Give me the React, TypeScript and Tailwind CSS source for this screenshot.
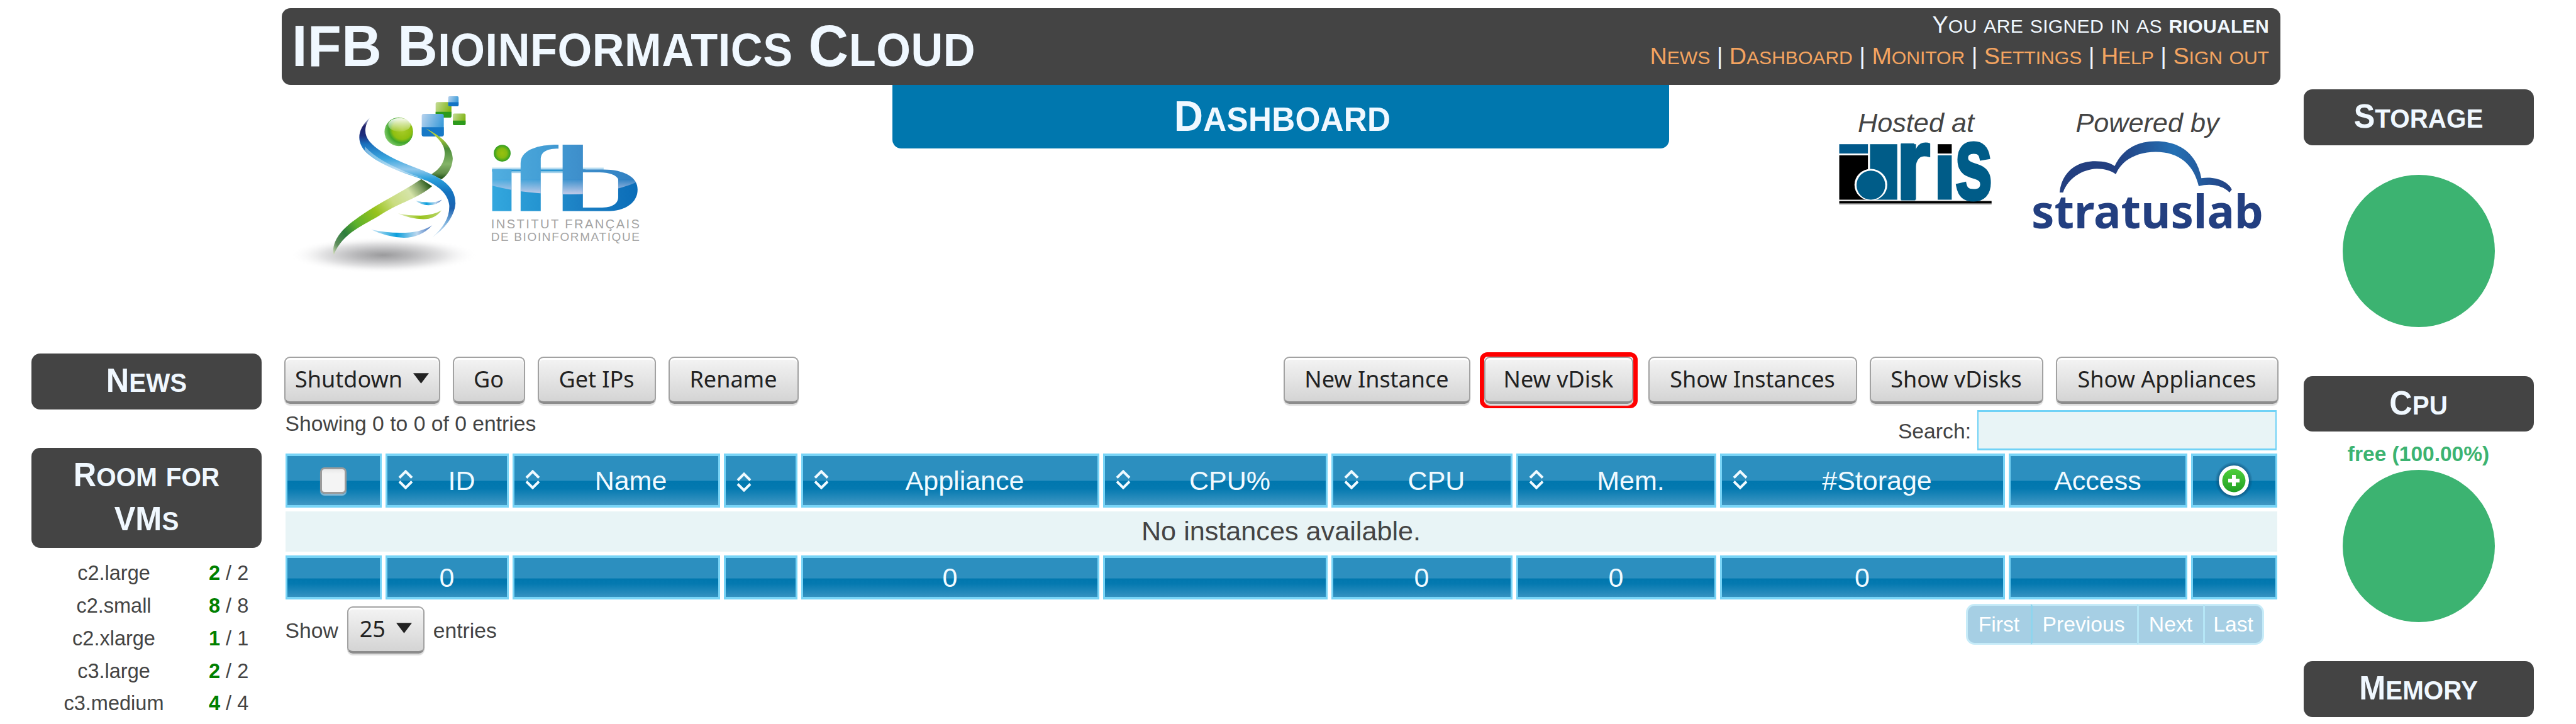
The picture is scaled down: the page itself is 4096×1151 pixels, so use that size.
import React from "react";

const SANS = "font-['Liberation_Sans',Arial,sans-serif]";

/* Small capitals at 80% of the full capital size. */
function Caps({ text }: { text: string }) {
  return (
    <>
      {text.split(/([a-z]+)/).map((part, i) =>
        /^[a-z]/.test(part) ? (
          <span key={i} className="text-[0.8em] leading-none uppercase">{part}</span>
        ) : (
          <React.Fragment key={i}>{part}</React.Fragment>
        ),
      )}
    </>
  );
}

function PanelTitle({ lines }: { lines: string[] }) {
  return (
    <h2 className="w-[366px] rounded-[14px] bg-[#444] py-[9px] text-center text-[50.5px] leading-[70.6px] font-bold text-[#f0f8ff]">
      {lines.map((line) => (
        <span key={line} className="block origin-[50%_75%] scale-y-[1.05]">
          <Caps text={line} />
        </span>
      ))}
    </h2>
  );
}

function Button({ label, className, arrow }: { label: string; className: string; arrow?: boolean }) {
  return (
    <button
      className={`flex h-[75px] shrink-0 items-center justify-center rounded-[9px] border-[2.5px] border-[#a2a2a2] border-b-[4px] border-b-[#8c8c8c] bg-linear-to-b from-[#f4f4f4] to-[#d4d4d4] font-['Noto_Sans','Open_Sans',sans-serif] text-[36px] whitespace-nowrap text-[#222] shadow-[inset_0_3px_0_#fff,0_3px_1px_#dedede] ${className}`}
    >
      {label}
      {arrow && <Arrow />}
    </button>
  );
}

function Arrow() {
  return (
    <svg className="mb-[4px] ml-[17px] h-[17px] w-[25px] shrink-0" viewBox="0 0 26 17">
      <path d="M0 0H26L13 17Z" fill="#222" />
    </svg>
  );
}

function SortIcon() {
  return (
    <svg className="h-[31px] w-[24px]" viewBox="0 0 24 31" fill="none" stroke="#f0faff" strokeWidth="4">
      <path d="M2 12.5L12 2.5L22 12.5M2 18.5L12 28.5L22 18.5" />
    </svg>
  );
}

function AddIcon() {
  return (
    <svg className="h-[60px] w-[60px]" viewBox="0 0 60 60">
      <defs>
        <linearGradient id="add" x1="0" y1="0" x2="0" y2="1">
          <stop offset="0" stopColor="#4fcf3c" />
          <stop offset="1" stopColor="#1f9f22" />
        </linearGradient>
        <radialGradient id="halo">
          <stop offset="0.78" stopColor="#0b4a72" stopOpacity="0.7" />
          <stop offset="1" stopColor="#0b4a72" stopOpacity="0" />
        </radialGradient>
      </defs>
      <circle cx="30" cy="30" r="30" fill="url(#halo)" />
      <circle cx="30" cy="30" r="24" fill="#fff" />
      <circle cx="30" cy="30" r="18.5" fill="url(#add)" />
      <path d="M30 21V39M21 30H39" stroke="#fff" strokeWidth="6" />
    </svg>
  );
}

function IfbLogo() {
  return (
    <svg className="h-[310px] w-[620px]" viewBox="447.5 135 620 310">
      <defs>
        <radialGradient id="floor">
          <stop offset="0" stopColor="#9a9a9c" />
          <stop offset="0.3" stopColor="#b9b9bb" />
          <stop offset="0.65" stopColor="#e4e4e5" />
          <stop offset="1" stopColor="#fff" stopOpacity="0" />
        </radialGradient>
        <linearGradient id="strandBlue" gradientUnits="userSpaceOnUse" x1="0" y1="218" x2="0" y2="1140">
          <stop offset="0" stopColor="#cfe0f0" />
          <stop offset="0.07" stopColor="#20206a" />
          <stop offset="0.15" stopColor="#1c2f80" />
          <stop offset="0.22" stopColor="#1a70bd" />
          <stop offset="0.34" stopColor="#3aa5de" />
          <stop offset="0.43" stopColor="#93c9ec" />
          <stop offset="0.51" stopColor="#2ba0dc" />
          <stop offset="0.62" stopColor="#1474c0" />
          <stop offset="0.76" stopColor="#1d62b0" />
          <stop offset="0.88" stopColor="#7fb2dd" />
          <stop offset="1" stopColor="#e4f1fa" />
        </linearGradient>
        <linearGradient id="strandTop" gradientUnits="userSpaceOnUse" x1="0" y1="300" x2="0" y2="692">
          <stop offset="0" stopColor="#bccf3c" />
          <stop offset="0.2" stopColor="#a5c63a" />
          <stop offset="0.4" stopColor="#4a8c38" />
          <stop offset="0.7" stopColor="#84b468" />
          <stop offset="0.88" stopColor="#5f8c48" />
          <stop offset="1" stopColor="#174a10" />
        </linearGradient>
        <linearGradient id="strandLow" gradientUnits="userSpaceOnUse" x1="790" y1="725" x2="50" y2="1270">
          <stop offset="0" stopColor="#1d5212" />
          <stop offset="0.08" stopColor="#7d9c62" />
          <stop offset="0.18" stopColor="#d5e4a8" />
          <stop offset="0.34" stopColor="#cadd80" />
          <stop offset="0.5" stopColor="#98c31c" />
          <stop offset="0.7" stopColor="#5bb02c" />
          <stop offset="0.82" stopColor="#2c7d3c" />
          <stop offset="0.93" stopColor="#5e8d5c" />
          <stop offset="1" stopColor="#cfdcb8" />
        </linearGradient>
        <linearGradient id="cubeBlue" x1="0" y1="0" x2="1" y2="0.4">
          <stop offset="0" stopColor="#b9d3ee" />
          <stop offset="1" stopColor="#3b9bd9" />
        </linearGradient>
        <linearGradient id="cubeGreen" x1="0" y1="0" x2="1" y2="0.4">
          <stop offset="0" stopColor="#c6dc98" />
          <stop offset="1" stopColor="#7fb414" />
        </linearGradient>
        <radialGradient id="head" cx="0.62" cy="0.42" r="0.62">
          <stop offset="0" stopColor="#a9cc2a" />
          <stop offset="0.55" stopColor="#8fbf10" />
          <stop offset="0.75" stopColor="#3fa52b" />
          <stop offset="1" stopColor="#7cc665" />
        </radialGradient>
        <linearGradient id="headShine" x1="0" y1="0" x2="0" y2="1">
          <stop offset="0" stopColor="#fff" stopOpacity="0.95" />
          <stop offset="1" stopColor="#fff" stopOpacity="0.1" />
        </linearGradient>
        <linearGradient id="arcBlue">
          <stop offset="0" stopColor="#d7eaf7" />
          <stop offset="0.42" stopColor="#0c9fdc" />
          <stop offset="0.75" stopColor="#bcd7ee" />
          <stop offset="0.95" stopColor="#5580c4" />
          <stop offset="1" stopColor="#a9bde2" />
        </linearGradient>
        <linearGradient id="arcGreen">
          <stop offset="0" stopColor="#e5efc4" />
          <stop offset="0.5" stopColor="#98c31c" />
          <stop offset="1" stopColor="#b8d56a" />
        </linearGradient>
        <linearGradient id="word" gradientUnits="userSpaceOnUse" x1="100" y1="0" x2="1222" y2="0">
          <stop offset="0" stopColor="#33a7de" />
          <stop offset="0.35" stopColor="#2393d0" />
          <stop offset="0.6" stopColor="#1c80c4" />
          <stop offset="1" stopColor="#0b6db8" />
        </linearGradient>
        <linearGradient id="shine" gradientUnits="userSpaceOnUse" x1="0" y1="350" x2="0" y2="475">
          <stop offset="0" stopColor="#c7cdea" stopOpacity="0.1" />
          <stop offset="1" stopColor="#c7cdea" stopOpacity="0.95" />
        </linearGradient>
        <radialGradient id="dot">
          <stop offset="0" stopColor="#97c10e" />
          <stop offset="0.55" stopColor="#84ba10" />
          <stop offset="1" stopColor="#2f9e22" />
        </radialGradient>
        <clipPath id="wordShape">
          <path d="M100 286H250V608H100ZM320 608V240C320 140 440 95 612 95V125C520 125 475 150 475 210V608ZM644 95H800V608H644ZM800 286H950C1130 286 1222 350 1222 440C1222 540 1130 608 980 608H800V580H950C1040 578 1072 540 1072 500V360C1060 330 1000 308 930 308H800Z" />
        </clipPath>
      </defs>
      <ellipse cx="609" cy="405.5" rx="150" ry="29" fill="url(#floor)" />
      <g transform="translate(519.9 142.3) scale(.2063)">
        <path d="M725 690L808 745C700 840 560 870 420 960C280 1050 120 1100 50 1275C30 1190 90 1090 220 1000C380 880 560 800 690 712Z" fill="url(#strandLow)" />
        <rect x="835" y="97" width="122" height="118" rx="14" fill="url(#cubeGreen)" />
        <path d="M835 172H957V203Q957 217 943 217H849Q835 217 835 203Z" fill="#2d9a1c" />
        <rect x="932" y="52" width="80" height="78" rx="10" fill="url(#cubeBlue)" />
        <path d="M932 98H1012V120Q1012 130 1002 130H942Q932 130 932 120Z" fill="#1274c4" />
        <rect x="968" y="185" width="98" height="90" rx="10" fill="url(#cubeGreen)" />
        <path d="M968 240H1066V265Q1066 275 1056 275H978Q968 275 968 265Z" fill="#2d9a1c" />
        <rect x="728" y="188" width="170" height="172" rx="16" fill="url(#cubeBlue)" />
        <path d="M728 290H898V346Q898 362 882 362H744Q728 362 728 346Z" fill="#1678c6" />
        <path d="M760 300C860 350 960 420 967 530C965 600 930 660 880 692L800 655C870 610 905 560 905 490C905 420 850 365 760 300Z" fill="url(#strandTop)" />
        <path d="M328 218C280 290 285 350 325 400C400 490 560 560 740 625C870 680 990 740 988 880C980 980 900 1080 808 1140C900 1060 945 980 940 890C930 800 850 740 760 700C600 650 400 580 300 485C225 410 225 310 328 218Z" fill="url(#strandBlue)" />
        <path d="M290 440C390 550 560 620 750 690C600 650 400 585 290 470Z" fill="#fff" opacity="0.4" />
        <circle cx="551" cy="326" r="110" fill="url(#head)" />
        <ellipse cx="556" cy="272" rx="86" ry="52" fill="url(#headShine)" />
        <path d="M680 856Q740 872 800 870Q850 868 885 848Q850 892 780 892Q720 888 680 856Z" fill="url(#arcBlue)" />
        <path d="M545 955Q620 972 720 972Q820 968 880 932Q830 1000 740 1000Q640 998 545 955Z" fill="url(#arcGreen)" />
        <path d="M335 1078Q450 1104 560 1104Q720 1105 810 1045Q720 1142 590 1142Q460 1138 335 1078Z" fill="url(#arcBlue)" />
      </g>
      <g transform="translate(761.3 210.4) scale(.2063)">
        <rect x="100" y="272" width="860" height="16" fill="#b8dcf1" />
        <rect x="100" y="286" width="720" height="16" fill="#2a96d2" />
        <rect x="250" y="302" width="400" height="12" fill="#a6d2ec" />
        <g clipPath="url(#wordShape)">
          <rect x="90" y="90" width="1140" height="530" fill="url(#word)" />
          <rect x="90" y="90" width="1140" height="275" fill="#c7cdea" opacity="0.2" />
          <path d="M90 365H1230V378Q1000 478 700 478Q350 478 90 408Z" fill="url(#shine)" />
        </g>
        <circle cx="178" cy="161" r="65" fill="url(#dot)" />
        <g className="font-['Liberation_Sans',Arial,sans-serif] text-[98px]" fill="#a4a4a4">
          <text x="92" y="741" textLength="1145">INSTITUT FRANÇAIS</text>
          <text x="92" y="836" textLength="1145" className="text-[92px]">DE BIOINFORMATIQUE</text>
        </g>
      </g>
    </svg>
  );
}

function IdrisLogo() {
  return (
    <svg className="h-[110px] w-[246px] overflow-visible not-italic" viewBox="2923 221 246 110">
      <g transform="translate(2896.5 154.7) scale(.4658 .2063)">
        <rect x="58" y="366" width="98" height="72" fill="#00588a" />
        <rect x="58" y="452" width="98" height="342" fill="#000" />
        <rect x="163" y="366" width="93" height="428" fill="#005c88" />
        <ellipse cx="166" cy="679" rx="56" ry="122" fill="#fff" />
        <ellipse cx="166" cy="682" rx="49" ry="112" fill="#005c88" />
        <rect x="268" y="366" width="52" height="428" fill="#005c88" />
        <rect x="394" y="366" width="48" height="72" fill="#000" />
        <rect x="394" y="452" width="48" height="342" fill="#005c88" />
        <rect x="58" y="804" width="520" height="20" fill="#000" />
        <rect x="58" y="824" width="520" height="10" fill="#c4c4c4" />
      </g>
      <g className="font-['Liberation_Sans',Arial,sans-serif] text-[166px] font-bold" fill="#005c88" stroke="#005c88">
        <text transform="translate(3013.5 318.4) scale(.86 1)" strokeWidth="3">r</text>
        <text transform="translate(3107 317.4) scale(.655 1)" strokeWidth="5">s</text>
      </g>
    </svg>
  );
}

function StratusLogo() {
  return (
    <svg className="h-[150px] w-[372px] overflow-visible not-italic" viewBox="3227 221 372 150">
      <defs>
        <linearGradient id="cloud" gradientUnits="userSpaceOnUse" x1="1000" y1="0" x2="1400" y2="0">
          <stop offset="0" stopColor="#233f80" />
          <stop offset="0.5" stopColor="#2470b4" />
          <stop offset="1" stopColor="#233f80" />
        </linearGradient>
      </defs>
      <g transform="translate(2896.5 154.7) scale(.4658 .2063)">
        <path
          d="M808 738C815 590 860 497 930 497C960 497 982 510 996 535C1022 410 1070 343 1136 343C1215 343 1275 430 1292 628C1345 610 1385 660 1396 715L1388 738C1365 685 1325 665 1283 690C1265 520 1215 425 1136 425C1070 425 1020 490 1000 598C985 570 960 555 935 555C880 560 835 640 820 738Z"
          fill="url(#cloud)"
        />
      </g>
      <text x="3228" y="363.5" textLength="369" lengthAdjust="spacingAndGlyphs" className="font-['Noto_Sans','Open_Sans',sans-serif] text-[74px] font-bold" fill="#233f80">
        stratuslab
      </text>
    </svg>
  );
}

const rooms = [
  ["c2.large", "2"],
  ["c2.small", "8"],
  ["c2.xlarge", "1"],
  ["c3.large", "2"],
  ["c3.medium", "4"],
];

const columns = [
  { label: "", total: "", sort: false },
  { label: "ID", total: "0", sort: true },
  { label: "Name", total: "", sort: true },
  { label: "", total: "", sort: true },
  { label: "Appliance", total: "0", sort: true },
  { label: "CPU%", total: "", sort: true },
  { label: "CPU", total: "0", sort: true },
  { label: "Mem.", total: "0", sort: true },
  { label: "#Storage", total: "0", sort: true },
  { label: "Access", total: "", sort: false },
  { label: "", total: "", sort: false },
];

const menu = ["News", "Dashboard", "Monitor", "Settings", "Help", "Sign out"];

const CELL = "flex items-center border-x-[3px] border-y-[4px] border-[#78d4f6] text-[43px] leading-[50px] text-[#f0faff]";

function LeftColumn() {
  return (
    <aside className="ml-[50px] w-[366px] shrink-0 pt-[562px]">
      <PanelTitle lines={["News"]} />
      <div className="h-[61px]" />
      <PanelTitle lines={["Room for", "VMs"]} />
      <ul className="mt-[15px] text-[32.5px] leading-[51.9px] text-[#444]">
        {rooms.map(([name, n]) => (
          <li key={name} className="flex">
            <span className="w-[262px] text-center">{name}</span>
            <span className="ml-[20px]">
              <b className="text-[#008000]">{n}</b> / {n}
            </span>
          </li>
        ))}
      </ul>
    </aside>
  );
}

function RightColumn() {
  return (
    <aside className="ml-[37px] w-[366px] shrink-0 pt-[142px]">
      <PanelTitle lines={["Storage"]} />
      <div className="mx-auto mt-[47px] size-[242px] rounded-full bg-[#3cb371]" />
      <div className="h-[78px]" />
      <PanelTitle lines={["Cpu"]} />
      <p className="mt-[16px] text-center text-[33.5px] leading-[40px] font-bold text-[#3cb371]">free (100.00%)</p>
      <div className="mx-auto mt-[5px] size-[242px] rounded-full bg-[#3cb371]" />
      <div className="h-[62px]" />
      <PanelTitle lines={["Memory"]} />
    </aside>
  );
}

function InstanceTable() {
  return (
    <div className="ml-[6px] grid w-[3167px] grid-cols-[153px_196px_330px_117px_474px_357px_288px_318px_453px_284px_137px] gap-x-[6px] gap-y-[6px]">
      {columns.map((c, i) => (
        <div key={i} className={`${CELL} h-[86px] bg-[linear-gradient(180deg,#2c8fbf_0%,#2c8fbf_50%,#0077ae_51%,#0479b0_66%,#3f97c3_100%)]`}>
          {c.sort && (
            <div className={`ml-[17px] w-[30px] ${i === 3 ? "pt-[5px]" : "pb-[3px]"}`}>
              <SortIcon />
            </div>
          )}
          <div className="flex flex-1 justify-center">
            {i === 0 && (
              <span className="size-[42px] rounded-[7px] border-[3px] border-[#9b9b9b] bg-linear-to-b from-[#e8e8e8] via-[#f4f4f4] via-20% to-[#f4f4f4] shadow-[0_3px_1px_#86b8d4]" />
            )}
            {i === 10 && <AddIcon />}
            {c.label}
          </div>
        </div>
      ))}
      <div className="col-span-11 h-[64px] bg-[#e8f4f6] text-center text-[43.2px] leading-[62px] text-[#444]">No instances available.</div>
      {columns.map((c, i) => (
        <div key={i} className={`${CELL} h-[70px] justify-center bg-[linear-gradient(180deg,#2c8fbf_0%,#2c8fbf_52%,#0077ae_53%,#0479b0_66%,#3592c1_100%)]`}>
          {c.total}
        </div>
      ))}
    </div>
  );
}

function Pager() {
  const cell = "flex items-center justify-center border-y-[3px] border-[#c6ebf8] bg-[#a6cfe4] pb-[2px]";
  return (
    <div className="mt-[7px] mr-[26px] flex h-[65px] text-[33.7px] text-white">
      <span className={`${cell} w-[103px] rounded-l-[14px] border-l-[3px]`}>First</span>
      <span className={`${cell} w-[169px] border-l-[3px] border-l-[#8ed5ee] pr-[3px]`}>Previous</span>
      <span className={`${cell} w-[105px] border-l-[3px] border-l-[#b5e6f6]`}>Next</span>
      <span className={`${cell} w-[97px] rounded-r-[14px] border-r-[3px] border-l-[3px] border-l-[#b5e6f6]`}>Last</span>
    </div>
  );
}

export default function App() {
  return (
    <div className={`flex h-[1151px] w-[4096px] overflow-hidden bg-white ${SANS}`}>
      <LeftColumn />

      <main className="ml-[31.5px] w-[3178px] shrink-0 pt-[12.5px]">
        <header className="flex h-[122.5px] justify-between rounded-[14px] bg-[#444] pr-[17.5px] pl-[16.5px] text-[#f0f8ff]">
          <h1 className="origin-[50%_75%] scale-y-[1.06] text-[88px] leading-[123px] font-bold tracking-[0.5px] whitespace-nowrap">
            <Caps text="IFB Bioinformatics Cloud" />
          </h1>
          <div className="pt-[1.5px] text-right text-[37.7px] leading-[50px] whitespace-nowrap">
            <p className="tracking-[0.25px]">
              <Caps text="You are signed in as " />
              <b>
                <Caps text="rioualen" />
              </b>
            </p>
            <nav className="tracking-[-0.05px]">
              {menu.map((m, i) => (
                <React.Fragment key={m}>
                  {i > 0 && " | "}
                  <a className="text-[#f4a460]">
                    <Caps text={m} />
                  </a>
                </React.Fragment>
              ))}
            </nav>
          </div>
        </header>

        <section className="flex h-[424.5px] items-start">
          <div className="w-[971.5px]">
            <IfbLogo />
          </div>
          <h2 className="h-[101px] w-[1235px] rounded-b-[14px] bg-[#0077ae] pl-[5px] text-center text-[64px] leading-[102px] font-bold tracking-[0.3px] text-[#f0f8ff]">
            <span className="block origin-[50%_72%] scale-y-[1.06]">
              <Caps text="Dashboard" />
            </span>
          </h2>
          <div className="flex flex-1 justify-end pt-[35px] pr-[25px] text-center text-[43.2px] leading-[50px] text-[#444] italic">
            <div className="mr-[59px] w-[246px]">
              Hosted at
              <IdrisLogo />
            </div>
            <div className="w-[372px]">
              Powered by
              <StratusLogo />
            </div>
          </div>
        </section>

        <div className="flex h-[89px] items-center justify-between pr-[3px] pl-[4px]">
          <div className="flex gap-[20px]">
            <Button label="Shutdown" className="w-[248px]" arrow />
            <Button label="Go" className="w-[115px]" />
            <Button label="Get IPs" className="w-[188px]" />
            <Button label="Rename" className="w-[207px]" />
          </div>
          <div className="flex items-center">
            <Button label="New Instance" className="w-[297px]" />
            <div className="mr-[17px] ml-[15px] h-[89px] w-[251px] rounded-[12px] border-[7px] border-[#f00]">
              <Button label="New vDisk" className="w-[237px]" />
            </div>
            <Button label="Show Instances" className="mr-[20px] w-[332px]" />
            <Button label="Show vDisks" className="mr-[20px] w-[276px]" />
            <Button label="Show Appliances" className="w-[354px]" />
          </div>
        </div>

        <div className="flex h-[72.5px] items-start justify-between pr-[5.5px] pl-[6px] text-[33.7px] leading-[40px] text-[#444]">
          <p className="pt-[4px]">Showing 0 to 0 of 0 entries</p>
          <label className="flex items-center gap-[10px] pt-[3px]">
            <span className="pt-[3px]">Search:</span>
            <input className="h-[64px] w-[476px] border-x-[2.5px] border-y-[3.5px] border-[#70d2f6] bg-[#e8f4f6]" />
          </label>
        </div>

        <InstanceTable />

        <div className="flex items-start justify-between pl-[6px] text-[33.7px] leading-[40px] text-[#444]">
          <div className="flex items-center gap-[14px] pt-[10.5px]">
            <span className="pt-[2px]">Show</span>
            <Button label="25" className="w-[123px]" arrow />
            <span className="pt-[2px]">entries</span>
          </div>
          <Pager />
        </div>
      </main>

      <RightColumn />
    </div>
  );
}
